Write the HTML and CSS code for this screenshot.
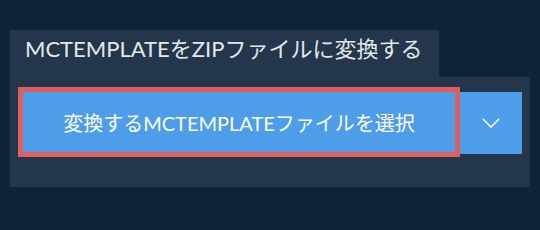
FILE: index.html
```html
<!DOCTYPE html>
<html lang="ja">
<head>
<meta charset="utf-8">
<link rel="stylesheet" href="styles.css">
</head>
<body>
<div class="wrap">
  <div class="tab">MCTEMPLATEをZIPファイルに変換する</div>
  <div class="panel">
    <div class="group">
      <button class="main">変換するMCTEMPLATEファイルを選択</button>
      <button class="drop" aria-label="more">
        <svg width="18" height="10" viewBox="0 0 18 10"><path d="M1 1 L9 9 L17 1" fill="none" stroke="#fff" stroke-width="1.5"/></svg>
      </button>
    </div>
  </div>
</div>
</body>
</html>
```
FILE: styles.css
```css
html, body {
  margin: 0;
  padding: 0;
  background: #11233a;
  width: 540px;
  height: 230px;
  overflow: hidden;
}
.wrap {
  padding: 30px 0 0 10px;
  font-family: Lato, "Noto Sans CJK JP", sans-serif;
}
.tab {
  width: 429px;
  height: 47px;
  box-sizing: border-box;
  padding: 5px 0 0 15px;
  background: #23364b;
  color: #e4e8ec;
  font-size: 22px;
  font-weight: 400;
  line-height: 28px;
  white-space: nowrap;
}
.panel {
  width: 520px;
  box-sizing: border-box;
  background: #23364b;
  padding: 10px 0 30px 8px;
}
.group {
  display: flex;
  align-items: flex-start;
}
.main {
  width: 442px;
  height: 70px;
  box-sizing: border-box;
  border: 5px solid #dd605c;
  background: #4d9de9;
  color: #fff;
  font-family: Lato, "Noto Sans CJK JP", sans-serif;
  font-size: 20px;
  padding: 0;
  margin: 0;
  white-space: nowrap;
}
.drop {
  width: 62px;
  height: 62px;
  margin: 5px 0 0 0;
  padding: 0;
  border: 0;
  background: #4d9de9;
  display: flex;
  align-items: center;
  justify-content: center;
}
.drop svg { display: block; }
```
